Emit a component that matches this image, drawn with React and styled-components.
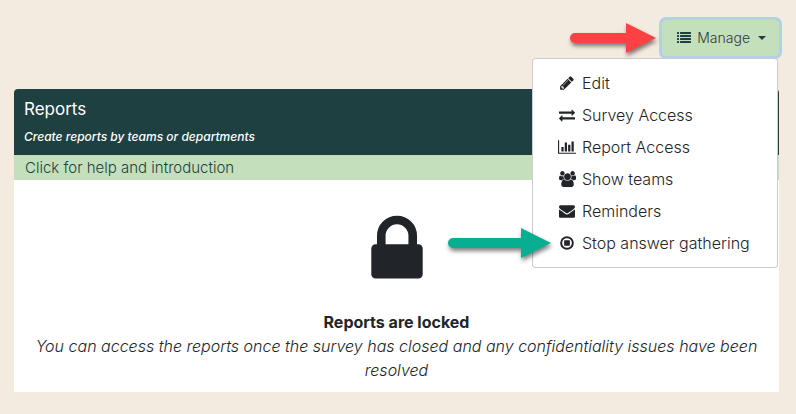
import { useState } from "react"
import styled, { createGlobalStyle } from "styled-components"

const GlobalStyle = createGlobalStyle`
  * {
    box-sizing: border-box;
  }

  body {
    margin: 0;
    background-color: #f4ebe0;
    color: #212529;
    font-family: Inter, "Liberation Sans", sans-serif;
    font-size: 16px;
    font-weight: 300;
    line-height: 24px;
  }
`;

const Page = styled.div`
  padding: 20px 17px 22px 14px;
`;

const Toolbar = styled.div`
  display: flex;
  justify-content: flex-end;
  margin-bottom: 33px;
`;

const Dropdown = styled.div`
  position: relative;
`;

const ManageButton = styled.button`
  display: flex;
  align-items: center;
  padding: 6px 12px;
  border: 1px solid #c4dfbc;
  border-radius: 4px;
  background-color: #c4dfbc;
  color: #1f4041;
  font-family: inherit;
  font-size: 14px;
  font-weight: 300;
  line-height: 22px;
  cursor: pointer;
  outline: none;
  box-shadow: 0 0 0 3px #b4cfe8;
`;

const Caret = styled.span`
  margin-left: 8px;
  border-top: 4px solid;
  border-left: 4px solid transparent;
  border-right: 4px solid transparent;
`;

const Menu = styled.ul`
  position: absolute;
  top: 100%;
  right: 1px;
  z-index: 2;
  min-width: 246px;
  margin: 2px 0 0;
  padding: 8px 0;
  list-style: none;
  background-color: white;
  border: 1px solid rgba(0, 0, 0, 0.2);
  border-radius: 4px;
`;

const MenuItem = styled.li`
  position: relative;
`;

const MenuLink = styled.a`
  display: flex;
  align-items: center;
  padding: 4px 24px;
  color: #212529;
  text-decoration: none;
  white-space: nowrap;
  &:hover {
    background-color: #f8f9fa;
  }
`;

const IconBox = styled.span`
  display: flex;
  justify-content: center;
  width: ${({ $width }) => $width}px;
  margin-right: ${({ $gap }) => $gap}px;
`;

const Pointer = styled.svg`
  position: absolute;
  z-index: 3;
  top: 50%;
  right: 100%;
  margin-right: ${({ $gap }) => $gap}px;
  transform: translateY(-50%);
  color: ${({ $color }) => $color};
  filter: drop-shadow(1px 3px 2px rgba(0, 0, 0, 0.5));
  overflow: visible;
  pointer-events: none;
`;

const Card = styled.section`
  background-color: white;
  border-radius: 4px 4px 0 0;
  overflow: hidden;
`;

const CardHeader = styled.header`
  padding: 8px 10px;
  background-color: #1f4041;
  color: white;
`;

const Title = styled.h1`
  margin: 0 0 6px;
  font-size: 17px;
  font-weight: 400;
  line-height: 24px;
`;

const Subtitle = styled.p`
  margin: 0;
  font-size: 12px;
  font-style: italic;
  font-weight: 500;
  line-height: 20px;
`;

const HelpButton = styled.button`
  display: block;
  width: 100%;
  padding: 0 11px;
  border: none;
  background-color: #c4dfbc;
  color: #1f4041;
  font-family: inherit;
  font-size: 15px;
  font-weight: 300;
  line-height: 25px;
  text-align: left;
  cursor: pointer;
`;

const CardBody = styled.div`
  display: flex;
  flex-direction: column;
  align-items: center;
  padding: 30px 10px 10px;
  text-align: center;
`;

const LockedTitle = styled.strong`
  margin-top: 20px;
  font-weight: 700;
`;

const LockedText = styled.em`
  font-style: italic;
`;

const Icon = ({ size, width = 1792, left = 0, children }) => (
  <svg
    width={Math.round((size * width) / 1792)}
    height={size}
    viewBox={`${left} 0 ${width} 1792`}
    fill="currentColor"
    aria-hidden="true"
  >
    {children}
  </svg>
)

const ListIcon = () => (
  <Icon size={14}>
    {[128, 512, 896, 1280].map((y) => (
      <g key={y}>
        <rect x="0" y={y} width="256" height="256" rx="32" />
        <rect x="384" y={y} width="1408" height="256" rx="32" />
      </g>
    ))}
  </Icon>
)

const PencilIcon = () => (
  <Icon size={16}>
    <path d="M491 1536l91-91-235-235-91 91v107h128v128h107zm523-928q0-22-22-22-10 0-17 7l-542 542q-7 7-7 17 0 22 22 22 10 0 17-7l542-542q7-7 7-17zm-54-192l416 416-832 832h-416v-416zm683 96q0 53-37 90l-166 166-416-416 166-165q36-38 90-38 53 0 91 38l235 234q37 39 37 91z" />
  </Icon>
)

const ExchangeIcon = () => (
  <Icon size={16}>
    <path d="M1792 1184v192q0 13-9.5 22.5t-22.5 9.5h-1376v192q0 13-9.5 22.5t-22.5 9.5q-12 0-24-10l-319-320q-9-9-9-22 0-14 9-23l320-320q9-9 23-9 13 0 22.5 9.5t9.5 22.5v192h1376q13 0 22.5 9.5t9.5 22.5zm0-544q0 14-9 23l-320 320q-9 9-23 9-13 0-22.5-9.5t-9.5-22.5v-192h-1376q-13 0-22.5-9.5t-9.5-22.5v-192q0-13 9.5-22.5t22.5-9.5h1376v-192q0-14 9-23t23-9q12 0 24 10l319 319q9 9 9 23z" />
  </Icon>
)

const ChartIcon = () => (
  <Icon size={16} width={2048}>
    <path d="M640 896v512h-256v-512h256zm384-512v1024h-256v-1024h256zm1024 1152v128h-2048v-1536h128v1408h1920zm-640-896v768h-256v-768h256zm384-384v1152h-256v-1152h256z" />
  </Icon>
)

const UsersIcon = () => (
  <Icon size={16} width={1920} left={-64}>
    <path d="M529 896q-162 5-265 128h-134q-82 0-138-40.5t-56-118.5q0-353 124-353 6 0 43.5 21t97.5 42.5 119 21.5q67 0 133-23-5 37-5 66 0 159 92 289zm1071 637q0 120-73 189.5t-194 69.5h-874q-121 0-194-69.5t-73-189.5q0-53 3.5-103.5t14-109 26.5-108.5 43-97.5 62-81 85.5-53.5 111.5-20q10 0 43 21.5t73 48 107 48 135 21.5 135-21.5 107-48 73-48 43-21.5q61 0 111.5 20t85.5 53.5 62 81 43 97.5 26.5 108.5 14 109 3.5 103.5zm-1024-1277q0 106-75 181t-181 75-181-75-75-181 75-181 181-75 181 75 75 181zm704 384q0 159-112.5 271.5t-271.5 112.5-271.5-112.5-112.5-271.5 112.5-271.5 271.5-112.5 271.5 112.5 112.5 271.5zm576 225q0 78-56 118.5t-138 40.5h-134q-103-123-265-128 92-130 92-289 0-29-5-66 66 23 133 23 59 0 119-21.5t97.5-42.5 43.5-21q124 0 124 353zm-128-609q0 106-75 181t-181 75-181-75-75-181 75-181 181-75 181 75 75 181z" />
  </Icon>
)

const EnvelopeIcon = () => (
  <Icon size={16}>
    <path d="M1792 710v794q0 66-47 113t-113 47h-1472q-66 0-113-47t-47-113v-794q44 49 101 87 362 246 497 345 57 42 92.5 65.5t94.5 48 110 24.5h2q51 0 110-24.5t94.5-48 92.5-65.5q170-123 498-345 57-39 100-87zm0-294q0 79-49 151t-122 123q-376 261-468 325-10 7-42.5 31t-54 38.5-52 32.5-57.5 27-50 9h-2q-23 0-50-9t-57.5-27-52-32.5-54-38.5-42.5-31q-91-64-262-182.5t-205-142.5q-62-42-117-115.5t-55-136.5q0-78 41.5-130t118.5-52h1472q65 0 112.5 47t47.5 113z" />
  </Icon>
)

const StopIcon = () => (
  <Icon size={16}>
    <circle cx="896" cy="896" r="656" fill="none" stroke="currentColor" strokeWidth="224" />
    <rect x="576" y="576" width="640" height="640" rx="32" />
  </Icon>
)

const LockIcon = () => (
  <Icon size={80}>
    <path d="M640 768h512v-192q0-106-75-181t-181-75-181 75-75 181v192zm832 96v576q0 40-28 68t-68 28h-960q-40 0-68-28t-28-68v-576q0-40 28-68t68-28h32v-192q0-184 132-316t316-132 316 132 132 316v192h32q40 0 68 28t28 68z" />
  </Icon>
)

const Arrow = ({ length, color, gap }) => (
  <Pointer
    width={length}
    height="30"
    viewBox={`0 0 ${length} 30`}
    $color={color}
    $gap={gap}
    aria-hidden="true"
  >
    <path
      d={`M5 10H${length - 30}V0L${length} 15L${length - 30} 30V20H5A5 5 0 0 1 5 10Z`}
      fill="currentColor"
    />
  </Pointer>
)

const items = [
  { label: "Edit", icon: PencilIcon },
  { label: "Survey Access", icon: ExchangeIcon },
  { label: "Report Access", icon: ChartIcon },
  { label: "Show teams", icon: UsersIcon },
  { label: "Reminders", icon: EnvelopeIcon },
  { label: "Stop answer gathering", icon: StopIcon, marked: true },
]

const App = () => {

  const [open, setOpen] = useState(true)

  return (
    <>
      <GlobalStyle />
      <Page>
        <Toolbar>
          <Dropdown>
            <Arrow length={86} color="#fb4141" gap={6} />
            <ManageButton type="button" aria-expanded={open} onClick={() => setOpen(!open)}>
              <IconBox $width={18} $gap={4}>
                <ListIcon />
              </IconBox>
              Manage
              <Caret />
            </ManageButton>
            {open && (
              <Menu>
                {items.map(({ label, icon: ItemIcon, marked }) => (
                  <MenuItem key={label}>
                    {marked && <Arrow length={103} color="#07ae90" gap={-18} />}
                    <MenuLink href="#">
                      <IconBox $width={20} $gap={5}>
                        <ItemIcon />
                      </IconBox>
                      {label}
                    </MenuLink>
                  </MenuItem>
                ))}
              </Menu>
            )}
          </Dropdown>
        </Toolbar>

        <Card>
          <CardHeader>
            <Title>Reports</Title>
            <Subtitle>Create reports by teams or departments</Subtitle>
          </CardHeader>
          <HelpButton type="button">Click for help and introduction</HelpButton>
          <CardBody>
            <LockIcon />
            <LockedTitle>Reports are locked</LockedTitle>
            <LockedText>
              You can access the reports once the survey has closed and any confidentiality issues have been resolved
            </LockedText>
          </CardBody>
        </Card>
      </Page>
    </>
  )
}

export default App
